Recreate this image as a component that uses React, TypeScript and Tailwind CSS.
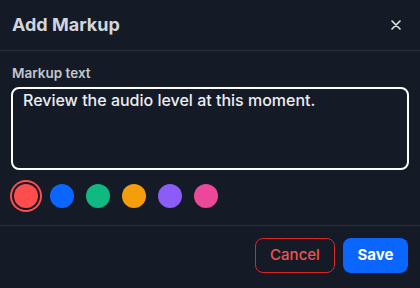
import React from "react";

const colors = ["#ff4d4f", "#0a66ff", "#10b981", "#f59e0b", "#8b5cf6", "#ec4899"];

export default function App() {
  return (
    <div
      className="w-[420px] h-[288px] bg-[#141b26] flex flex-col overflow-hidden"
      style={{ fontFamily: "Inter, 'Liberation Sans', sans-serif" }}
    >
      <div className="h-[51px] px-3 flex items-center justify-between border-b border-[#283039] shrink-0">
        <h2 className="text-[18px] font-bold text-[#d2d6dc] leading-6">Add Markup</h2>
        <button className="w-6 h-6 flex items-center justify-center text-[#e5e7eb]">
          <svg width="10" height="10" viewBox="0 0 10 10" fill="none">
            <path d="M1 1L9 9M9 1L1 9" stroke="currentColor" strokeWidth="1.6" strokeLinecap="round" />
          </svg>
        </button>
      </div>
      <div className="px-[11px] pt-[12px] pb-[17px] flex flex-col">
        <label className="block pl-px text-[13.5px] font-semibold leading-5 text-[#c3c7ce]">Markup text</label>
        <textarea
          className="mt-1 w-full h-[83px] resize-none rounded-lg border-2 border-white bg-[#141b26] pl-[10px] pt-[1px] text-[16px] leading-5 font-medium text-[#eceef1] outline-none"
          defaultValue="Review the audio level at this moment."
        />
        <div className="mt-[14px] pl-[3px] flex gap-3">
          {colors.map((c, i) => (
            <button
              key={c}
              className={
                i === 0
                  ? "w-6 h-6 rounded-full ring-2 ring-[#ff4d4f] ring-offset-2 ring-offset-[#141b26]"
                  : "w-6 h-6 rounded-full"
              }
              style={{ backgroundColor: c }}
            />
          ))}
        </div>
      </div>
      <div className="border-t border-[#283039] pt-3 px-3 flex justify-end gap-2">
        <button className="w-[80px] h-[35px] rounded-lg border border-[#dc2626] text-[15px] font-medium text-[#f05252]">
          Cancel
        </button>
        <button className="w-[65px] h-[35px] rounded-lg bg-[#0a66ff] text-[15px] font-bold text-white">
          Save
        </button>
      </div>
    </div>
  );
}
